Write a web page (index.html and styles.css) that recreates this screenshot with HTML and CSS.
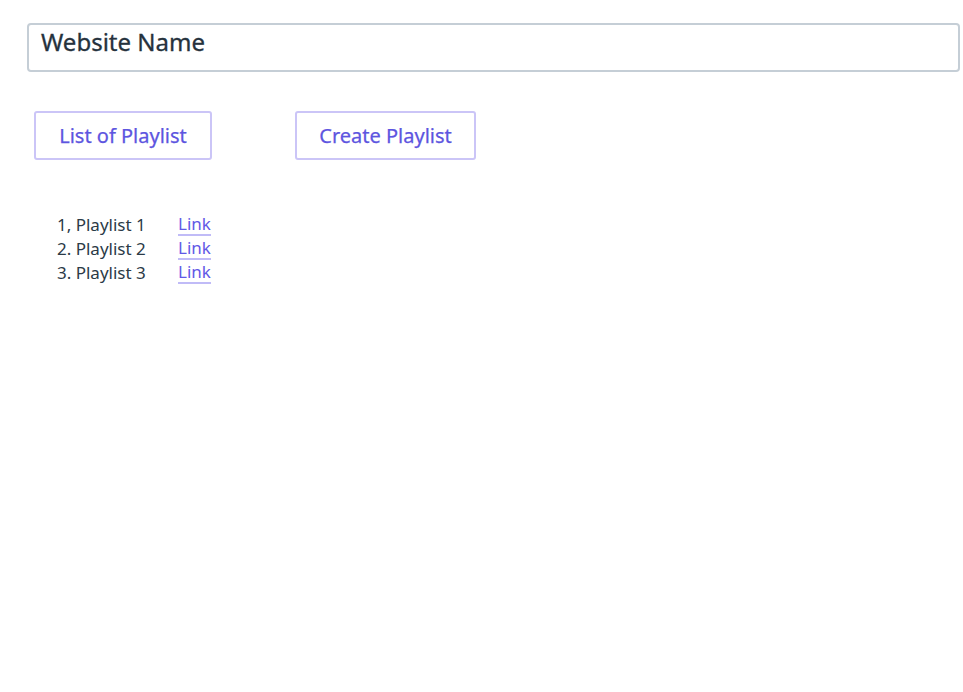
FILE: index.html
```html
<!DOCTYPE html>
<html>
<head>
<meta charset="utf-8">
<link rel="stylesheet" href="styles.css">
</head>
<body>
<div class="page">
  <header class="site-header">Website Name</header>
  <nav class="actions">
    <a class="btn btn-list">List of Playlist</a>
    <a class="btn btn-create">Create Playlist</a>
  </nav>
  <ul class="playlists">
    <li><span class="name">1, Playlist 1</span><a class="link">Link</a></li>
    <li><span class="name">2. Playlist 2</span><a class="link">Link</a></li>
    <li><span class="name">3. Playlist 3</span><a class="link">Link</a></li>
  </ul>
</div>
</body>
</html>
```

FILE: styles.css
```css
* { box-sizing: border-box; }
body {
  margin: 0;
  background: #ffffff;
  font-family: "Noto Sans", "DejaVu Sans", sans-serif;
  color: #2b3a47;
}
.page {
  padding: 23px 3px 0 27px;
}
.site-header {
  height: 49px;
  border: 2px solid #c5ced6;
  border-radius: 4px;
  padding: 1px 12px 0;
  font-size: 24px;
  line-height: 32px;
  color: #26323d;
  -webkit-text-stroke: 0.3px #26323d;
}
.actions {
  display: flex;
  gap: 83px;
  margin: 39px 0 0 7px;
}
.btn {
  display: flex;
  align-items: center;
  justify-content: center;
  height: 49px;
  border: 2px solid #cbc5f7;
  border-radius: 3px;
  font-size: 20px;
  color: #5d55e0;
  -webkit-text-stroke: 0.25px #5d55e0;
}
.btn-list { width: 178px; }
.btn-create { width: 181px; }
.playlists {
  list-style: none;
  margin: 52px 0 0 30px;
  padding: 0;
}
.playlists li {
  display: flex;
  height: 24px;
  align-items: center;
  font-size: 17px;
}
.name {
  width: 121px;
  color: #2b3a47;
}
.link {
  color: #6159e6;
  border-bottom: 2px solid #c0bbf7;
  line-height: 21px;
}
```
